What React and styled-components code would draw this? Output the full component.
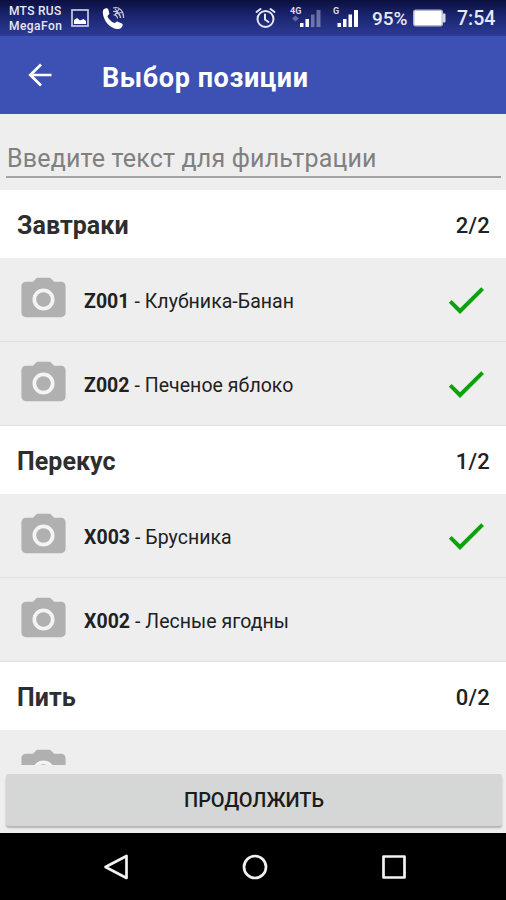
import styled, { createGlobalStyle } from "styled-components";

const GlobalStyle = createGlobalStyle`
  * {
    box-sizing: border-box;
  }

  body {
    margin: 0;
    font-family: Roboto, "Liberation Sans", sans-serif;
    color: #212121;
  }

  p,
  h1,
  h2 {
    margin: 0;
  }

  svg {
    display: block;
    flex-shrink: 0;
  }
`;

const Screen = styled.div`
  display: flex;
  flex-direction: column;
  width: 506px;
  height: 900px;
  background-color: #eeeeee;
  overflow: hidden;
`;

const StatusBar = styled.div`
  display: flex;
  align-items: center;
  flex-shrink: 0;
  height: 36px;
  padding: 0 10px 0 9px;
  color: #e6e8f4;
  background: linear-gradient(#0b103f, #1b2570 45%, #2d3b97);
`;

const Carriers = styled.div`
  width: 54px;
  margin: 2px 8px 0 0;
  font-size: 12px;
  font-weight: 500;
  line-height: 15px;
  white-space: nowrap;

  & p:first-child {
    letter-spacing: 0.3px;
  }

  & p:last-child {
    letter-spacing: 0.45px;
  }
`;

const StatusIcons = styled.div`
  display: flex;
  align-items: center;
  gap: 12px;
`;

const StatusRight = styled.div`
  display: flex;
  align-items: center;
  margin-left: auto;
`;

const Battery = styled.p`
  width: 37px;
  margin: 1px 4px 0 13px;
  font-size: 19px;
  font-weight: 500;
  letter-spacing: -0.1px;
`;

const Clock = styled.p`
  width: 39px;
  margin: 1px 0 0 11px;
  font-size: 19.5px;
  font-weight: 500;
`;

const Toolbar = styled.header`
  display: flex;
  align-items: center;
  flex-shrink: 0;
  height: 78px;
  padding-left: 28px;
  color: #fff;
  background-color: #3d50b3;

  & h1 {
    margin: 5px 0 0 50px;
    font-size: 27px;
    font-weight: 700;
    line-height: 32px;
    letter-spacing: 0.6px;
  }
`;

const Search = styled.div`
  flex-shrink: 0;
  height: 76px;
  padding: 25px 5px 0 6px;

  & input {
    display: block;
    width: 100%;
    height: 39px;
    padding: 1px 0 0 1px;
    border: 0;
    border-bottom: 2px solid #a3a3a3;
    outline: none;
    background: none;
    font-family: inherit;
    font-size: 25px;
    letter-spacing: 0.18px;
  }

  & input::placeholder {
    color: #808080;
    opacity: 1;
  }
`;

const List = styled.div`
  height: 575px;
  overflow: hidden;
`;

const GroupHeader = styled.div`
  display: flex;
  align-items: center;
  justify-content: space-between;
  height: 68px;
  padding: 3px 16px 0 17px;
  background-color: #fff;

  & h2 {
    color: #2e2e2e;
    font-size: 25px;
    font-weight: 700;
    letter-spacing: 0.05px;
  }

  & p {
    font-size: 22px;
    font-weight: 500;
    letter-spacing: 0.2px;
  }
`;

const Row = styled.div`
  display: flex;
  align-items: center;
  height: 84px;
  padding: 0 16px 0 17px;
  border-bottom: 1px solid #e0e0e0;

  & p {
    flex: 1;
    margin: 3px 0 0 14px;
    font-size: 19.5px;
    letter-spacing: 0.04px;
    white-space: nowrap;
  }

  & b {
    font-weight: 700;
  }
`;

const Footer = styled.div`
  flex-shrink: 0;
  height: 68px;
  padding: 9px 4px 0 6px;
`;

const ContinueButton = styled.button`
  display: block;
  width: 100%;
  height: 52px;
  padding: 0;
  border: 0;
  border-radius: 3px;
  color: #1c1c1c;
  background-color: #d5d7d6;
  box-shadow: 0 2px 2px rgba(0, 0, 0, 0.25);
  font-family: inherit;
  font-size: 20px;
  font-weight: 500;
  letter-spacing: -0.1px;
  text-transform: uppercase;
`;

const NavBar = styled.nav`
  display: flex;
  justify-content: center;
  align-items: center;
  gap: 111px;
  flex-shrink: 0;
  height: 67px;
  padding-left: 3px;
  background-color: #000;
`;

const groups = [
  {
    title: "Завтраки",
    count: "2/2",
    items: [
      { code: "Z001", name: "Клубника-Банан", checked: true },
      { code: "Z002", name: "Печеное яблоко", checked: true },
    ],
  },
  {
    title: "Перекус",
    count: "1/2",
    items: [
      { code: "X003", name: "Брусника", checked: true },
      { code: "X002", name: "Лесные ягодны", checked: false },
    ],
  },
  {
    title: "Пить",
    count: "0/2",
    items: [{ code: "", name: "", checked: false }],
  },
];

function CameraIcon() {
  return (
    <svg width="53" height="53" viewBox="0 0 24 24" fill="#b0b0b0">
      <circle cx="12" cy="12" r="8" fill="#f4f4f4" />
      <path
        fillRule="evenodd"
        d="M9 2.200L7.200 4H4c-1.100 0-2 .9-2 2v12c0 1.100.9 2 2 2h16c1.100 0 2-.9 2-2V6c0-1.100-.9-2-2-2h-3.200L15 2.200zM12 17a5 5 0 1 1 0-10 5 5 0 0 1 0 10z"
      />
      <circle cx="12" cy="12" r="3.300" />
    </svg>
  );
}

function CheckIcon() {
  return (
    <svg width="48" height="48" viewBox="0 0 24 24" fill="#0ba30b">
      <path d="M9 16.170L4.830 12l-1.420 1.410L9 19 21 7l-1.410-1.410z" />
    </svg>
  );
}

function PictureIcon() {
  return (
    <svg width="18" height="18" viewBox="0 0 18 18">
      <rect x="1" y="1" width="16" height="16" fill="none" stroke="#c9cce2" strokeWidth="1.700" />
      <path d="M3 15v-4l3-2 3 2.500 3.500-1.500 2.500 2v3z" fill="#fff" />
    </svg>
  );
}

function CallIcon() {
  return (
    <svg width="24" height="24" viewBox="-1 -1 24 24" fill="none" stroke="#fff">
      <path
        d="M1.500 2.500C4 .5 6 1 6.500 3l.8 3.500c.2 1-1.800 1.800-1.800 2.800 1 3 4 5.700 6.800 6.700 1 .2 2-1.800 3-1.600l4.500 2.200c1.600 1 1 2.700-.8 4.400-2 2-5.500 1-8.500-.5C6.500 18.500 3 14.500 1.500 9.500.8 7 .3 4 1.500 2.500z"
        fill="#fff"
        stroke="none"
      />
      <path d="M11 1c6-2 11 3 10.500 10M11 4.500c4-1 7.500 2.500 7.500 6.500M11.500 8c2-.5 4 1.500 4 3.500M13 1.500l6 9M17 2L13 8.500M20.500 5.500L13 6.500" strokeWidth="1.200" opacity="0.75" />
    </svg>
  );
}

function AlarmIcon() {
  return (
    <svg width="23" height="22" viewBox="0 0 23 22" fill="none" stroke="#e3e5f0" strokeWidth="2">
      <circle cx="10.500" cy="12" r="8" />
      <path d="M10 7.500V12.500l3.500 2.500M1.500 5l4-3M19.500 5l-4-3" strokeLinecap="round" />
    </svg>
  );
}

function SignalIcon({ label, weak }) {
  const x = weak ? 10 : 4.5;
  return (
    <svg width={weak ? 31 : 26} height="22" viewBox={`0 0 ${weak ? 31 : 26} 22`} fill="#fff">
      <text x="0" y="7" fontSize="9" fontWeight="700" fill="#d9dcee">
        {label}
      </text>
      {weak && <path d="M2 11.500l3.500-3 3.500 3-3.500 3z" opacity="0.3" />}
      <rect x={x} y="16" width="3.500" height="4" />
      <rect x={x + 5.5} y="12" width="3.500" height="8" />
      <rect x={x + 11} y="7.500" width="3.500" height="12.500" opacity={weak ? 0.35 : 1} />
      <rect x={x + 16.5} y="3" width="4" height="17" opacity={weak ? 0.35 : 1} />
    </svg>
  );
}

function BatteryIcon() {
  return (
    <svg width="33" height="18" viewBox="0 0 33 18">
      <rect x="0.800" y="1.200" width="28.500" height="15.600" rx="2" fill="#fff" stroke="#b5b8cc" strokeWidth="1.500" />
      <rect x="29.500" y="4.500" width="3" height="9" rx="1" fill="#d5d8e6" />
    </svg>
  );
}

function BackArrow() {
  return (
    <svg width="24" height="24" viewBox="0 0 24 24" fill="none" stroke="#fff" strokeWidth="2.700">
      <path d="M23.500 12H2.500M13 1.500L2.300 12 13 22.500" />
    </svg>
  );
}

function NavIcon({ children }) {
  return (
    <svg width="28" height="28" viewBox="0 0 28 28" fill="none" stroke="#f2f2f2" strokeWidth="2.700" strokeLinejoin="round">
      {children}
    </svg>
  );
}

export default function App() {
  return (
    <>
      <GlobalStyle />
      <Screen>
        <StatusBar>
          <Carriers>
            <p>MTS RUS</p>
            <p>MegaFon</p>
          </Carriers>
          <StatusIcons>
            <PictureIcon />
            <CallIcon />
          </StatusIcons>
          <StatusRight>
            <StatusIcons>
              <AlarmIcon />
              <SignalIcon label="4G" weak />
              <SignalIcon label="G" />
            </StatusIcons>
            <Battery>95%</Battery>
            <BatteryIcon />
            <Clock>7:54</Clock>
          </StatusRight>
        </StatusBar>

        <Toolbar>
          <BackArrow />
          <h1>Выбор позиции</h1>
        </Toolbar>

        <Search>
          <input placeholder="Введите текст для фильтрации" />
        </Search>

        <List>
          {groups.map((group) => (
            <section key={group.title}>
              <GroupHeader>
                <h2>{group.title}</h2>
                <p>{group.count}</p>
              </GroupHeader>
              {group.items.map((item) => (
                <Row key={item.code}>
                  <CameraIcon />
                  {item.code && (
                    <p>
                      <b>{item.code}</b> - {item.name}
                    </p>
                  )}
                  {item.checked && <CheckIcon />}
                </Row>
              ))}
            </section>
          ))}
        </List>

        <Footer>
          <ContinueButton>Продолжить</ContinueButton>
        </Footer>

        <NavBar>
          <NavIcon>
            <path d="M24.500 3v22L3.500 14z" />
          </NavIcon>
          <NavIcon>
            <circle cx="14" cy="14" r="11" />
          </NavIcon>
          <NavIcon>
            <rect x="3.500" y="3.500" width="21" height="21" />
          </NavIcon>
        </NavBar>
      </Screen>
    </>
  );
}
